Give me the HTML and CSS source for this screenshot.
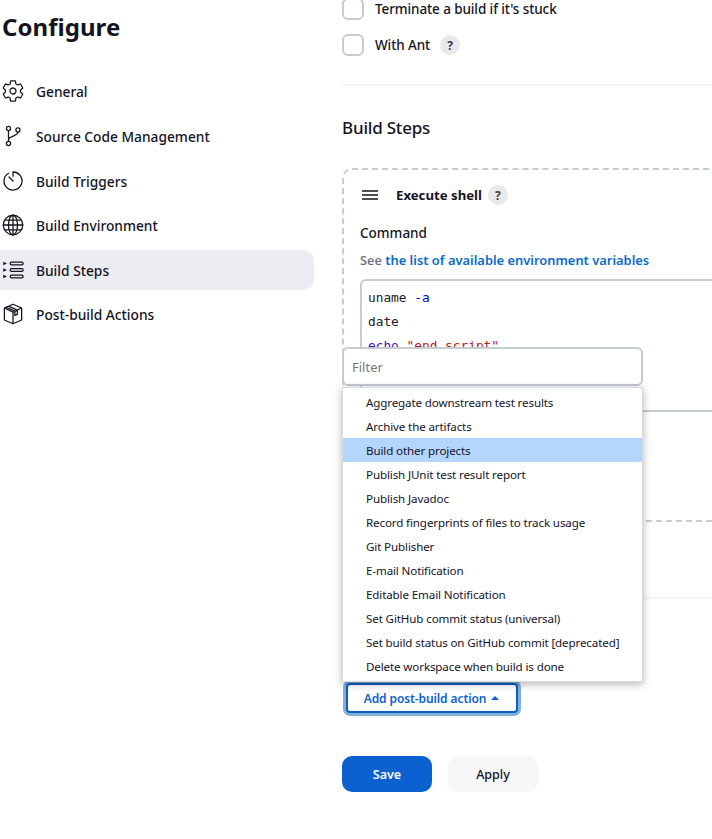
FILE: index.html
```html
<!DOCTYPE html>
<html lang="en">
<head>
<meta charset="utf-8">
<title>Configure</title>
<link rel="stylesheet" href="styles.css">
</head>
<body>
<div class="page">
  <aside class="sidebar">
    <h1 class="title">Configure</h1>
    <nav class="nav">
      <a class="nav-item">
        <svg class="nav-icon" viewBox="0 0 512 512"><path class="ln" d="M262.29 192.31a64 64 0 1057.4 57.4 64.13 64.13 0 00-57.4-57.4zM416.39 256a154.34 154.34 0 01-1.53 20.79l45.21 35.46a10.81 10.81 0 012.45 13.75l-42.77 74a10.81 10.81 0 01-13.14 4.59l-44.9-18.08a16.11 16.11 0 00-15.17 1.75A164.48 164.48 0 01325 400.8a15.94 15.94 0 00-8.82 12.14l-6.73 47.89a11.08 11.08 0 01-10.68 9.17h-85.54a11.11 11.11 0 01-10.69-8.87l-6.72-47.82a16.07 16.07 0 00-9-12.22 155.3 155.3 0 01-21.46-12.57 16 16 0 00-15.11-1.71l-44.89 18.07a10.81 10.81 0 01-13.14-4.58l-42.77-74a10.8 10.8 0 012.45-13.75l38.21-30a16.05 16.05 0 006-14.08c-.36-4.17-.58-8.33-.58-12.5s.21-8.27.58-12.35a16 16 0 00-6.07-13.94l-38.19-30A10.81 10.81 0 0149.48 186l42.77-74a10.81 10.81 0 0113.14-4.59l44.9 18.08a16.11 16.11 0 0015.17-1.75A164.48 164.48 0 01187 111.2a15.94 15.94 0 008.82-12.14l6.73-47.89A11.08 11.08 0 01213.23 42h85.54a11.11 11.11 0 0110.69 8.87l6.72 47.82a16.07 16.07 0 009 12.22 155.3 155.3 0 0121.46 12.57 16 16 0 0015.11 1.71l44.89-18.07a10.81 10.81 0 0113.14 4.58l42.77 74a10.8 10.8 0 01-2.45 13.75l-38.21 30a16.05 16.05 0 00-6.05 14.08c.33 4.14.55 8.3.55 12.47z"/></svg>
        <span class="nav-text">General</span>
      </a>
      <a class="nav-item">
        <svg class="nav-icon" viewBox="0 0 512 512"><circle class="ln" cx="160" cy="96" r="44"/><circle class="ln" cx="160" cy="416" r="44"/><circle class="ln" cx="362" cy="128" r="44"/><path class="ln" d="M160 140v232M362 172c0 100-202 70-202 170"/></svg>
        <span class="nav-text">Source Code Management</span>
      </a>
      <a class="nav-item">
        <svg class="nav-icon" viewBox="0 0 512 512"><path class="ln" d="M160 90A192 192 0 10256 64v90"/><path class="ln" d="M170 170l86 86"/></svg>
        <span class="nav-text">Build Triggers</span>
      </a>
      <a class="nav-item">
        <svg class="nav-icon" viewBox="0 0 512 512"><circle class="ln" cx="256" cy="256" r="208"/><ellipse class="ln" cx="256" cy="256" rx="96" ry="208"/><path class="ln" d="M256 48v416M48 256h416M84 150h344M84 362h344"/></svg>
        <span class="nav-text">Build Environment</span>
      </a>
      <a class="nav-item is-active">
        <svg class="nav-icon" viewBox="0 0 512 512"><rect class="ln" x="196" y="90" width="276" height="56" rx="28"/><rect class="ln" x="196" y="228" width="276" height="56" rx="28"/><rect class="ln" x="196" y="366" width="276" height="56" rx="28"/><path class="fill" d="M48 82l80 36-80 36zM48 220l80 36-80 36zM48 358l80 36-80 36z"/></svg>
        <span class="nav-text">Build Steps</span>
      </a>
      <a class="nav-item">
        <svg class="nav-icon" viewBox="0 0 512 512"><path class="ln" d="M256 48L72 128v256l184 80 184-80V128zM72 128l184 88 184-88M256 216v248M164 88l184 84v92l-52 24v-94L112 112"/></svg>
        <span class="nav-text">Post-build Actions</span>
      </a>
    </nav>
  </aside>

  <main class="main">
    <label class="check"><span class="box"></span><span>Terminate a build if it's stuck</span></label>
    <label class="check"><span class="box"></span><span>With Ant</span><span class="help">?</span></label>
    <hr class="rule rule-top">
    <h2 class="section">Build Steps</h2>
    <section class="step">
      <div class="step-head">
        <svg class="drag" viewBox="0 0 16 10"><path d="M0 1h16M0 5h16M0 9h16"/></svg>
        <b class="step-title">Execute shell</b>
        <span class="help">?</span>
      </div>
      <div class="label">Command</div>
      <div class="hint">See <a class="link">the list of available environment variables</a></div>
      <div class="editor">
        <div>uname <span class="tk-opt">-a</span></div>
        <div>date</div>
        <div><span class="tk-cmd">echo</span> <span class="tk-str">"end script"</span></div>
      </div>
    </section>
    <hr class="rule rule-bottom">
    <button class="add-btn">Add post-build action <span class="caret"></span></button>
    <div class="actions">
      <button class="btn-save">Save</button>
      <button class="btn-apply">Apply</button>
    </div>

    <div class="picker">
      <div class="filter">Filter</div>
      <ul class="menu">
        <li>Aggregate downstream test results</li>
        <li>Archive the artifacts</li>
        <li class="is-hover">Build other projects</li>
        <li>Publish JUnit test result report</li>
        <li>Publish Javadoc</li>
        <li>Record fingerprints of files to track usage</li>
        <li>Git Publisher</li>
        <li>E-mail Notification</li>
        <li>Editable Email Notification</li>
        <li>Set GitHub commit status (universal)</li>
        <li>Set build status on GitHub commit [deprecated]</li>
        <li>Delete workspace when build is done</li>
      </ul>
    </div>
  </main>
</div>
</body>
</html>
```
FILE: styles.css
```css
* { box-sizing: border-box; }
html, body { margin: 0; height: 839px; overflow: hidden; background: #fff; }
body { font-family: "Noto Sans", "Open Sans", sans-serif; font-size: 13.5px; color: #14141f; }

.page { display: grid; grid-template-columns: 314px 370px; column-gap: 28px; width: 712px; }

.title { margin: 10px 0 0 2px; font-size: 24px; line-height: 34px; font-weight: 700; letter-spacing: .05px; }
.nav { display: flex; flex-direction: column; gap: 4.6px; margin-top: 27.45px; }
.nav-item { display: flex; align-items: center; gap: 11px; height: 40px; padding-left: 1px; border-radius: 0 10px 10px 0; font-size: 13.75px; font-weight: 500; }
.nav-text { padding-top: 1px; }
.is-active { background: #ecedf2; }
.nav-icon { width: 24px; height: 24px; flex: none; }
.ln { fill: none; stroke: #14141f; stroke-width: 27; stroke-linecap: round; stroke-linejoin: round; }
.fill { fill: #14141f; }

.main { position: relative; margin-top: -2px; }
.check { display: flex; align-items: center; gap: 11px; height: 22px; margin-bottom: 14px; font-weight: 500; letter-spacing: -.1px; }
.box { width: 22px; height: 22px; border: 2px solid #c3ccd1; border-radius: 6px; flex: none; }
.help { display: flex; align-items: center; justify-content: center; width: 20px; height: 20px; border-radius: 50%; background: #e9e9ec; font-size: 12px; font-weight: 700; color: #3b3b47; }
.check .help { margin-left: -1px; }
.rule { border: 0; height: 2px; background: #f4f4f6; margin: 0; }
.rule-top { margin-top: 28px; }
.section { margin: 29px 0 0; font-size: 17px; line-height: 26px; font-weight: 500; letter-spacing: -.2px; }

.step { height: 354px; margin-top: 27px; padding: 0 0 0 16px; border: 2px dashed #c3ccd1; border-right: 0; border-radius: 10px 0 0 10px; }
.step-head { display: flex; align-items: center; height: 20px; margin-top: 15px; }
.drag { width: 16px; height: 10px; flex: none; margin-left: 2px; }
.drag path { fill: none; stroke: #14141f; stroke-width: 1.3; }
.step-title { margin: 0 6px 0 18px; font-size: 13.2px; font-weight: 700; }
.label { margin-top: 18px; line-height: 20px; font-weight: 500; }
.hint { margin-top: 7px; line-height: 20px; font-size: 12.9px; color: #6a6a78; font-weight: 500; }
.link { color: #0b6aca; font-weight: 600; }
.editor { height: 133px; margin-top: 9px; padding: 5px 6px; border: 2px solid #c3ccd1; border-right: 0; border-radius: 6px 0 0 6px; font-family: "DejaVu Sans Mono", monospace; font-size: 12.8px; line-height: 24px; color: #222; }
.tk-opt { color: #0000c8; }
.tk-cmd { color: #4a10b0; }
.tk-str { color: #b5201c; }

.rule-bottom { margin-top: 75px; }
.add-btn { display: flex; align-items: center; justify-content: center; gap: 5px; width: 172px; height: 30px; margin: 84px 0 0 4px; padding-left: 5px; border: 2px solid #0b5fc0; border-radius: 4px; background: #fff; box-shadow: 0 0 0 3px #7fb2d9; color: #0b61cf; font: 600 12px "Noto Sans", sans-serif; letter-spacing: -.1px; }
.caret { width: 0; height: 0; border: 4px solid transparent; border-top: 0; border-bottom: 4px solid #0b61cf; }
.actions { display: flex; gap: 16px; margin-top: 43px; }
.btn-save, .btn-apply { width: 90px; height: 36px; border: 0; border-radius: 10px; font: 600 12.5px "Noto Sans", sans-serif; }
.btn-save { background: #0b61cf; color: #fff; }
.btn-apply { background: #f6f6f8; color: #14141f; font-weight: 500; }

.picker { position: absolute; left: 0; top: 349px; width: 301px; }
.filter { display: flex; align-items: center; height: 39px; padding-left: 8px; background: #fff; border: 2px solid #c3ccd1; border-radius: 6px; color: #777; font-size: 13px; }
.menu { list-style: none; margin: 1px 0 0; padding: 2px 0; height: 295px; background: #fff; border: 1px solid #d8dadd; box-shadow: 0 2px 8px rgba(0, 0, 0, .3); font-size: 11.6px; letter-spacing: -.13px; }
.menu li { height: 24px; line-height: 24px; padding: 1px 0 0 23px; white-space: nowrap; }
.is-hover { background: #b4d5fd; }
```
